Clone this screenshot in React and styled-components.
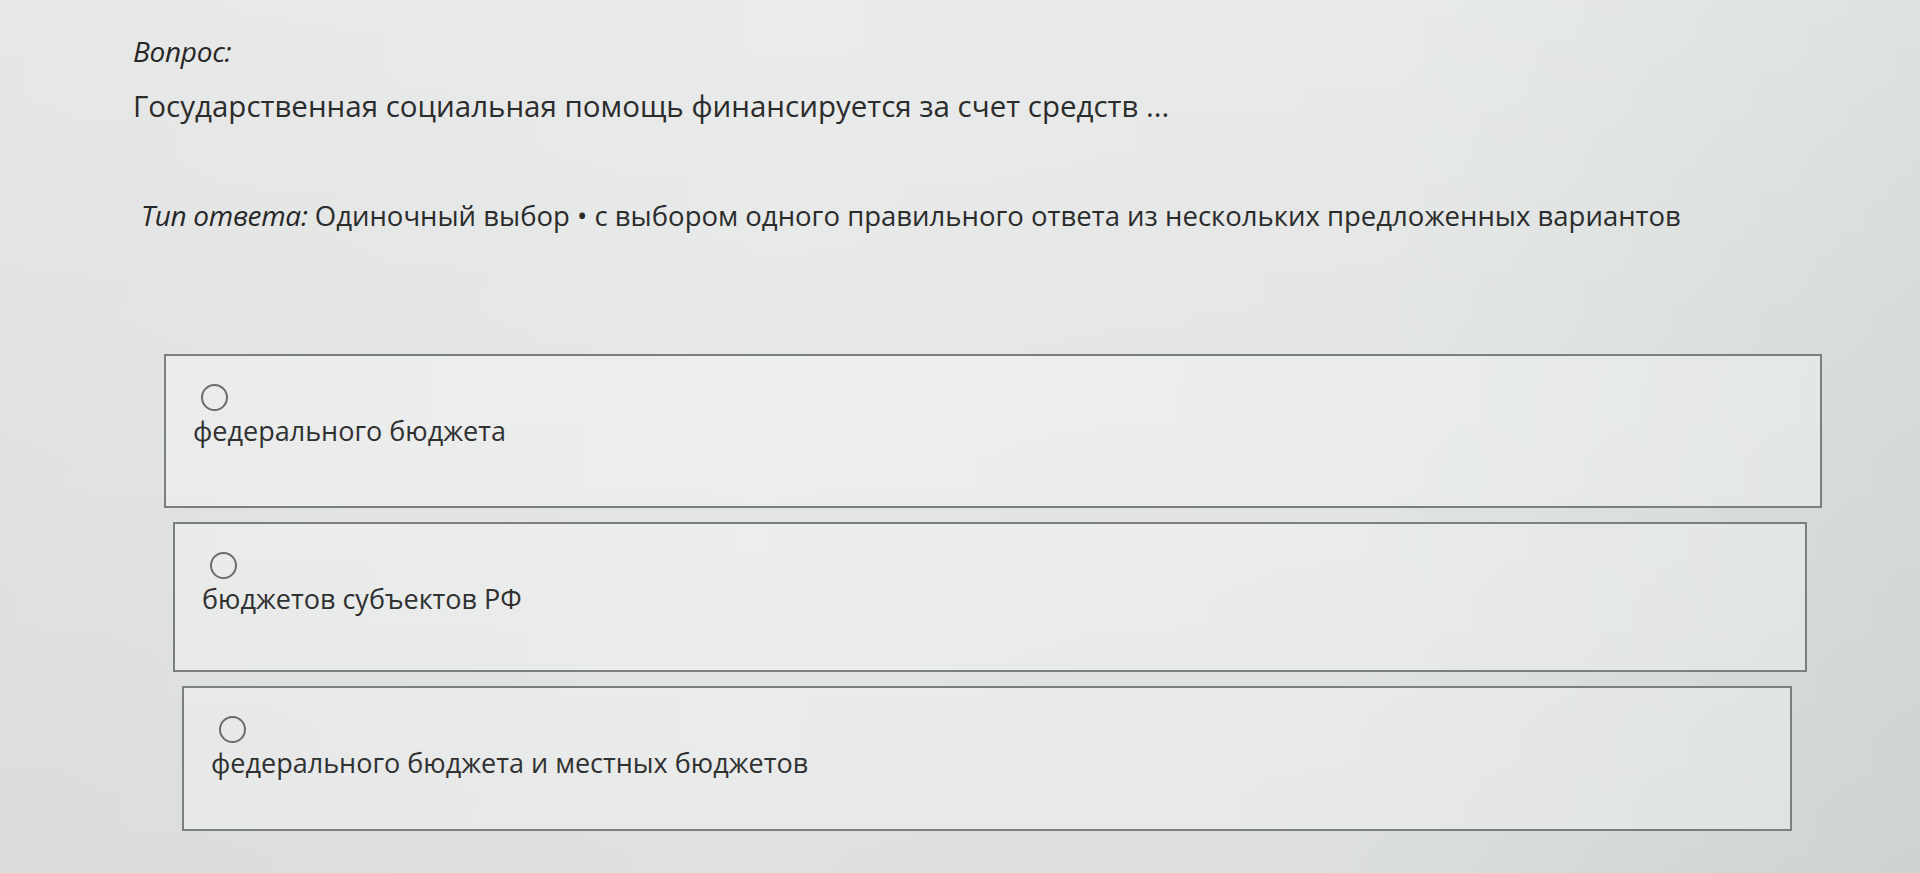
import React from 'react'
import styled, { createGlobalStyle } from 'styled-components'

const options = [
    `федерального бюджета`,
    `бюджетов субъектов РФ`,
    `федерального бюджета и местных бюджетов`
]

const App = () => {
    return (
        <>
            <GlobalStyle/>
            <Page>
                <Caption>Вопрос:</Caption>
                <Question>Государственная социальная помощь финансируется за счет средств ...</Question>
                <AnswerType>
                    <Caption as={`span`}>Тип ответа:</Caption> Одиночный выбор • с выбором одного правильного ответа из нескольких предложенных вариантов
                </AnswerType>
                <Options>
                    {options.map((text, i) =>
                        <Option key={text} $step={i}>
                            <Radio/>
                            <OptionText>{text}</OptionText>
                        </Option>
                    )}
                </Options>
            </Page>
        </>
    )
}

export default App

// Styled Components
const GlobalStyle = createGlobalStyle`
    html, body {
        margin:0;
        min-height:100%;
    }
    body {
        font-family:"Open Sans", "Noto Sans", sans-serif;
        color:#2b2c2c;
        background:
            linear-gradient(180deg, rgba(255,255,255,0.18) 0%, rgba(255,255,255,0) 45%, rgba(0,0,0,0.03) 100%),
            linear-gradient(95deg, #e1e2e2 0%, #e6e7e7 40%, #e3e6e5 70%, #d4dad8 100%);
        min-height:873px;
    }
`
const Page = styled.main`
    padding:31px 0 0 133px;
    min-height:873px;
    box-sizing:border-box;
`
const Caption = styled.div`
    font-style:italic;
    font-size:28px;
    line-height:40px;
    letter-spacing:-0.3px;
    color:#262727;
    margin-bottom:15px;
`
const Question = styled.div`
    font-size:29.5px;
    line-height:40px;
    margin-bottom:69px;
`
const AnswerType = styled.div`
    font-size:27.5px;
    line-height:40px;
    padding-left:8px;
    margin-bottom:118px;
    span {
        margin:0;
    }
`
const Options = styled.div`
    display:flex;
    flex-direction:column;
    gap:14px;
`
const Option = styled.div`
    box-sizing:border-box;
    height:${props => 154 - props.$step * 4.5}px;
    width:${props => 1658 - props.$step * 24}px;
    margin-left:${props => 31 + props.$step * 9}px;
    padding:28px 27px 0 27px;
    border:2px solid #7b7f7e;
    background:rgba(255,255,255,0.3);
    display:flex;
    flex-direction:column;
    align-items:flex-start;
`
const Radio = styled.span`
    display:block;
    box-sizing:border-box;
    width:27px;
    height:27px;
    border-radius:50%;
    border:2px solid #6a6c6c;
    margin-left:8px;
`
const OptionText = styled.div`
    font-size:27px;
    line-height:32px;
    margin-top:4px;
    color:#303131;
`
